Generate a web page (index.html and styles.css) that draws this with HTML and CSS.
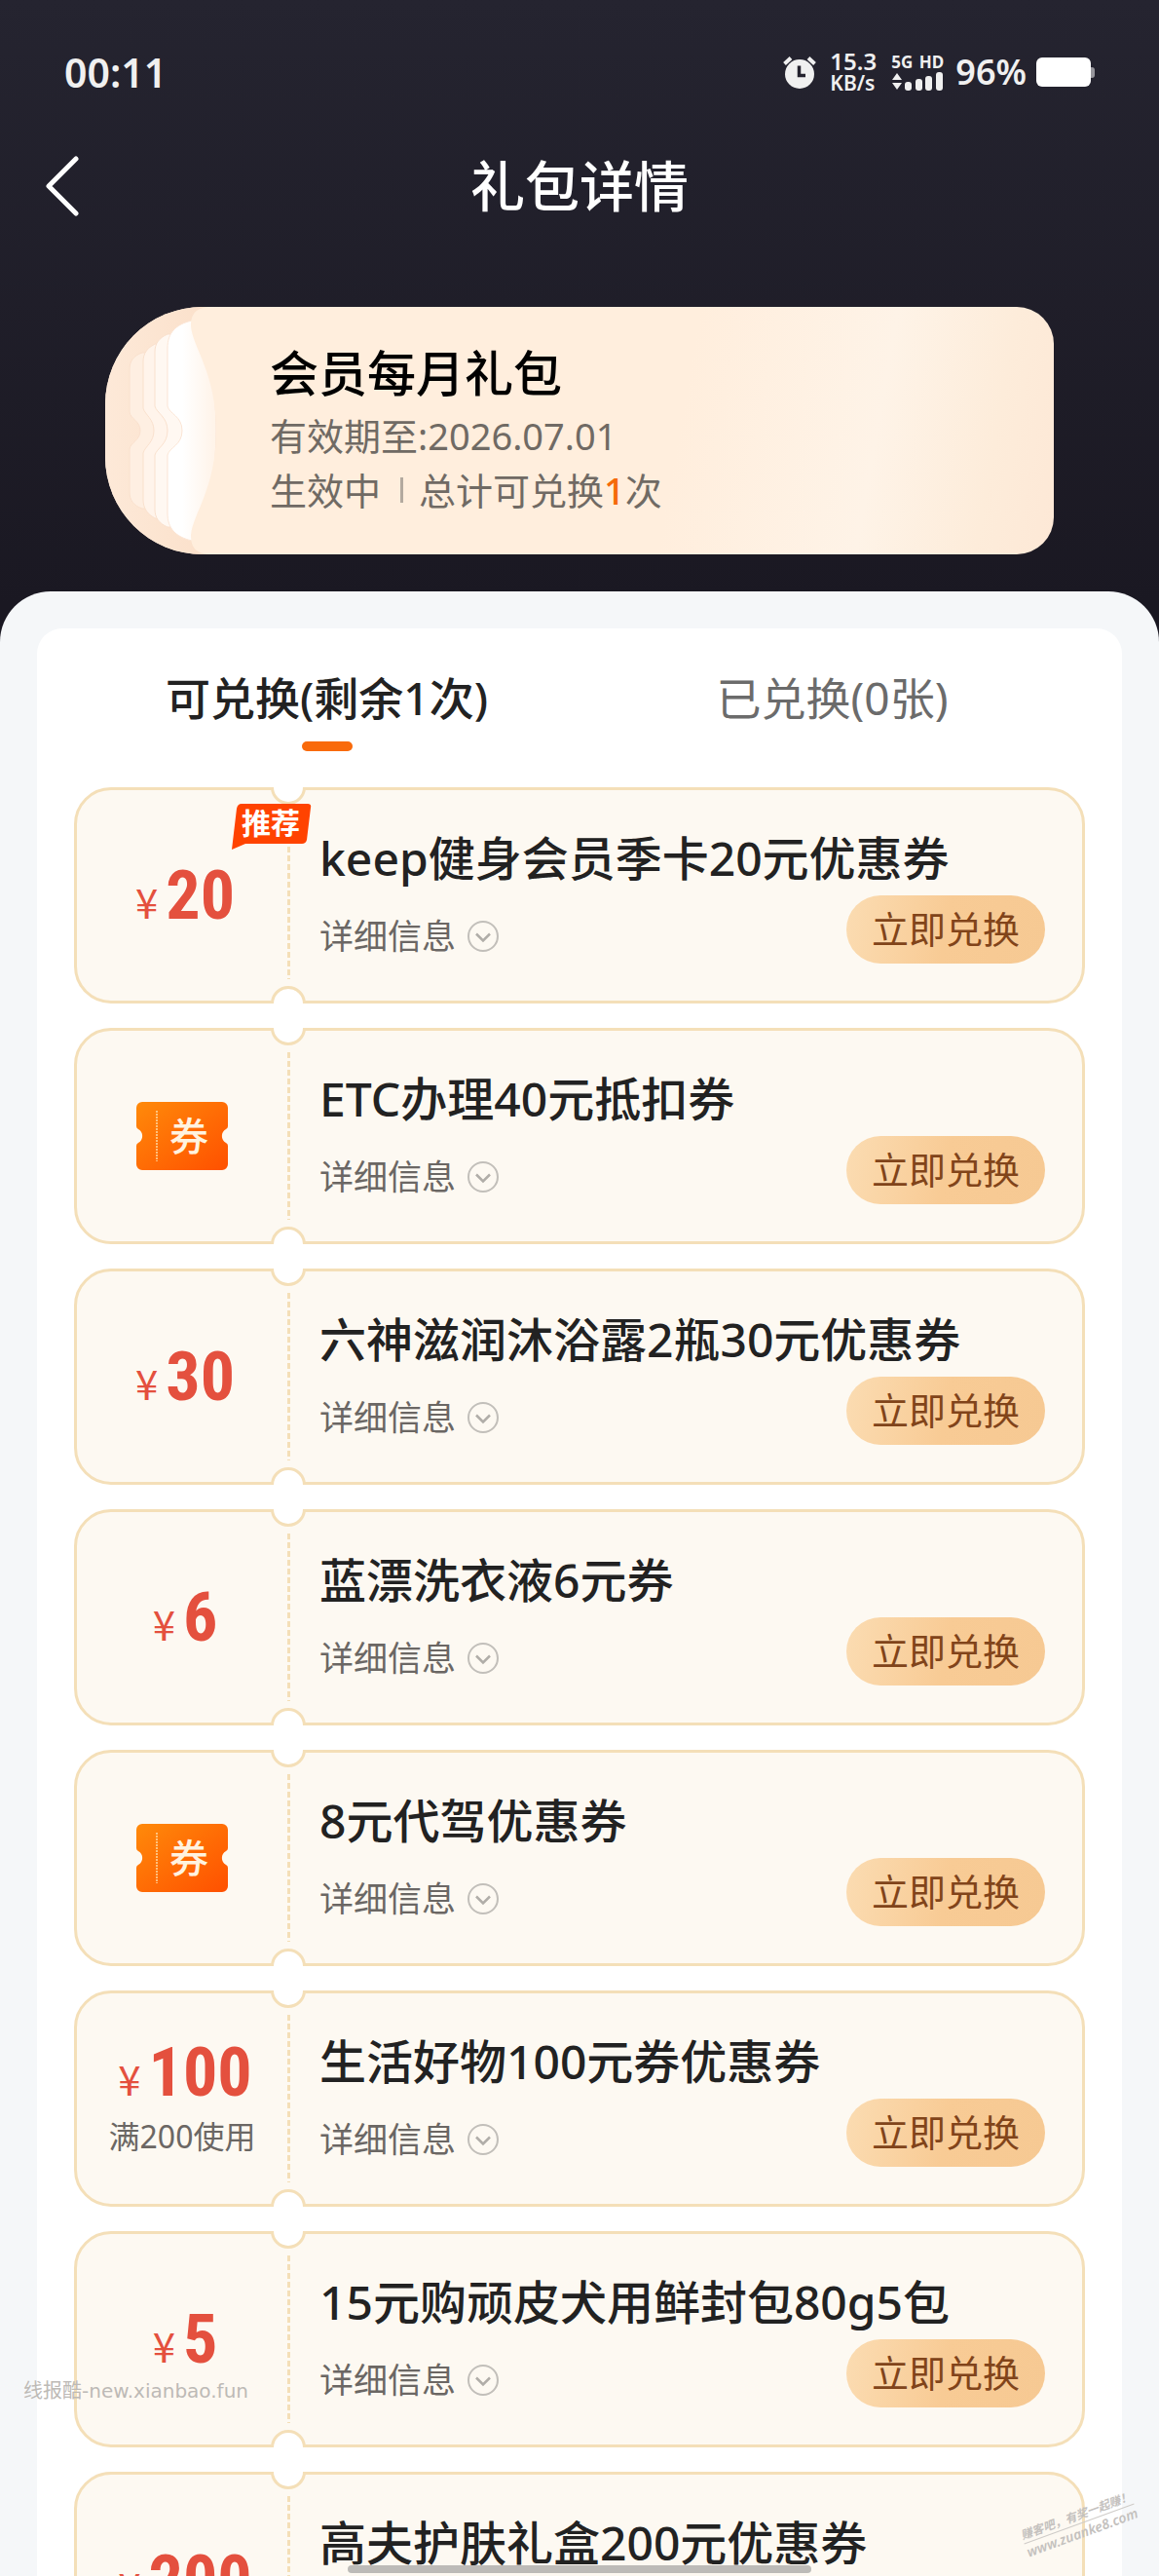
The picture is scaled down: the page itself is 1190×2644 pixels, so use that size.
FILE: index.html
```html
<!DOCTYPE html>
<html lang="zh-CN">
<head>
  <meta charset="UTF-8" />
  <meta name="viewport" content="width=device-width, initial-scale=1.0" />
  <title>礼包详情</title>
  <link rel="stylesheet" href="styles.css">
</head>
<body>
  <svg class="symbols" aria-hidden="true">
    <defs>
      <linearGradient id="orange" x1="0" y1="0" x2="1" y2="1">
        <stop offset="0" stop-color="#ff8a0a" />
        <stop offset="1" stop-color="#ff5000" />
      </linearGradient>
    </defs>
    <symbol id="voucher" viewBox="0 0 94 70">
      <path fill="url(#orange)" d="M6 0H88a6 6 0 0 1 6 6V25q0 2-2 3a8 8 0 0 0 0 14q2 1 2 3V64a6 6 0 0 1-6 6H6a6 6 0 0 1-6-6V45q0-2 2-3a8 8 0 0 0 0-14q-2-1-2-3V6a6 6 0 0 1 6-6Z" />
      <path stroke="#ffd9a0" stroke-width="1.5" stroke-dasharray="2 1" d="M21 9V61" />
    </symbol>
    <symbol id="down" viewBox="0 0 32 32">
      <circle cx="16" cy="16" r="15" fill="none" stroke="#c2bfba" stroke-width="2" />
      <path d="M9 13.500l7 7 7-7" fill="none" stroke="#b0ada8" stroke-width="2.500" />
    </symbol>
  </svg>

  <header class="top">
    <div class="status">
      <span class="time">00:11</span>
      <svg class="alarm" viewBox="0 0 34 34" aria-hidden="true">
        <circle cx="17" cy="19" r="15" fill="#f0f0f0" />
        <path d="M1.500 8.500L8 2.500M32.500 8.500L26 2.500" stroke="#f0f0f0" stroke-width="4" />
        <path d="M16.500 10.500V20.500H23" fill="none" stroke="#24222e" stroke-width="3.500" />
      </svg>
      <span class="speed"><b>15.3</b><i>KB/s</i></span>
      <span class="signal">
        <span class="net"><b>5G</b><b>HD</b></span>
        <svg viewBox="0 0 54 20" aria-hidden="true">
          <path fill="#f0f0f0" d="M6 1l5 7H1zM6 18l5-7H1z" />
          <rect x="14" y="10" width="7" height="9" rx="3" fill="#f0f0f0" />
          <rect x="25" y="7" width="7" height="12" rx="3" fill="#f0f0f0" />
          <rect x="35" y="4" width="7" height="15" rx="3" fill="#f0f0f0" />
          <rect x="46" y="0" width="7" height="19" rx="3" fill="#f0f0f0" />
        </svg>
      </span>
      <span class="percent">96%</span>
      <svg class="battery" viewBox="0 0 60 30" aria-hidden="true">
        <rect x="54" y="10" width="6" height="11" rx="3" fill="#97969c" />
        <rect x="0" y="0" width="56" height="30" rx="6" fill="#fff" />
      </svg>
    </div>

    <nav class="nav">
      <button class="back" aria-label="返回">
        <svg viewBox="0 0 36 62" aria-hidden="true">
          <path d="M32 3L4 31l28 28" fill="none" stroke="#fff" stroke-width="5" stroke-linecap="round" stroke-linejoin="round" />
        </svg>
      </button>
      <h1>礼包详情</h1>
    </nav>

    <section class="member">
      <svg class="pages" viewBox="0 0 130 254" aria-hidden="true">
        <defs>
          <linearGradient id="front" x1="0" y1="0" x2="1" y2="0">
            <stop offset="0.300" stop-color="#fff" />
            <stop offset="1" stop-color="#fff3e8" />
          </linearGradient>
          <linearGradient id="edge" x1="0" y1="0" x2="1" y2="0">
            <stop offset="0" stop-color="#fde9d8" />
            <stop offset="1" stop-color="#fbe0ca" />
          </linearGradient>
        </defs>
        <path fill="url(#edge)" d="M0 0H110V254H0Z" />
        <g stroke="#f9e0cd" stroke-width="1">
          <path fill="#feefe2" d="M38 47C29 50 25 56 25 64V108C26 115 36 117 36 127C36 137 26 139 25 146V190C25 198 29 204 38 207H90V47Z" />
          <path fill="#fff4eb" d="M54 37C43 41 39 48 39 56V104C41 111 50 115 50 127C50 139 41 143 39 150V198C39 206 43 214 54 218H90V37Z" />
          <path fill="#fff8f2" d="M64 28C55 32 51 38 51 46V102C53 109 64 113 64 127C64 141 53 145 51 152V208C51 216 55 222 64 226H90V28Z" />
        </g>
        <path fill="url(#front)" stroke="#fbe5d5" stroke-width="1" d="M89 14C72 18 64 27 64 42V102C66 110 79 112 79 127C79 142 66 144 64 152V212C64 227 72 236 89 240C106 208 114 170 114 127C114 84 106 46 89 14Z" />
        <path fill="#ffeedd" d="M110 0C92 0 88 8 88 20C90 42 114 68 114 127C114 186 90 212 88 234C88 246 92 254 110 254H130V0Z" />
      </svg>
      <h2>会员每月礼包</h2>
      <p>有效期至:2026.07.01</p>
      <p class="state">生效中<span class="bar"></span>总计可兑换<em>1</em>次</p>
    </section>
  </header>

  <main class="sheet">
    <div class="panel">
      <div class="tabs" role="tablist">
        <button class="tab active" role="tab" aria-selected="true">可兑换(剩余1次)</button>
        <button class="tab" role="tab" aria-selected="false">已兑换(0张)</button>
      </div>

      <ul class="list">
        <li class="coupon">
          <div class="worth"><p class="price"><small>¥</small>20</p></div>
          <span class="badge">
            <svg viewBox="0 0 82 47" aria-hidden="true">
              <path fill="#ff4300" d="M10 0H78Q82 0 81 4L77 37Q76 41 72 41H14L0 47L5 5Q6 0 10 0Z" />
            </svg>
            <b>推荐</b>
          </span>
          <div class="info">
            <h3>keep健身会员季卡20元优惠券</h3>
            <div class="foot">
              <button class="detail">详细信息<svg aria-hidden="true"><use href="#down" /></svg></button>
              <button class="redeem">立即兑换</button>
            </div>
          </div>
        </li>
        <li class="coupon">
          <div class="worth"><span class="voucher"><svg aria-hidden="true"><use href="#voucher" /></svg><b>券</b></span></div>
          <div class="info">
            <h3>ETC办理40元抵扣券</h3>
            <div class="foot">
              <button class="detail">详细信息<svg aria-hidden="true"><use href="#down" /></svg></button>
              <button class="redeem">立即兑换</button>
            </div>
          </div>
        </li>
        <li class="coupon">
          <div class="worth"><p class="price"><small>¥</small>30</p></div>
          <div class="info">
            <h3>六神滋润沐浴露2瓶30元优惠券</h3>
            <div class="foot">
              <button class="detail">详细信息<svg aria-hidden="true"><use href="#down" /></svg></button>
              <button class="redeem">立即兑换</button>
            </div>
          </div>
        </li>
        <li class="coupon">
          <div class="worth"><p class="price"><small>¥</small>6</p></div>
          <div class="info">
            <h3>蓝漂洗衣液6元券</h3>
            <div class="foot">
              <button class="detail">详细信息<svg aria-hidden="true"><use href="#down" /></svg></button>
              <button class="redeem">立即兑换</button>
            </div>
          </div>
        </li>
        <li class="coupon">
          <div class="worth"><span class="voucher"><svg aria-hidden="true"><use href="#voucher" /></svg><b>券</b></span></div>
          <div class="info">
            <h3>8元代驾优惠券</h3>
            <div class="foot">
              <button class="detail">详细信息<svg aria-hidden="true"><use href="#down" /></svg></button>
              <button class="redeem">立即兑换</button>
            </div>
          </div>
        </li>
        <li class="coupon">
          <div class="worth"><p class="price"><small>¥</small>100</p><p class="limit">满200使用</p></div>
          <div class="info">
            <h3>生活好物100元券优惠券</h3>
            <div class="foot">
              <button class="detail">详细信息<svg aria-hidden="true"><use href="#down" /></svg></button>
              <button class="redeem">立即兑换</button>
            </div>
          </div>
        </li>
        <li class="coupon">
          <div class="worth"><p class="price"><small>¥</small>5</p></div>
          <div class="info">
            <h3>15元购顽皮犬用鲜封包80g5包</h3>
            <div class="foot">
              <button class="detail">详细信息<svg aria-hidden="true"><use href="#down" /></svg></button>
              <button class="redeem">立即兑换</button>
            </div>
          </div>
        </li>
        <li class="coupon">
          <div class="worth"><p class="price"><small>¥</small>200</p></div>
          <div class="info">
            <h3>高夫护肤礼盒200元优惠券</h3>
            <div class="foot">
              <button class="detail">详细信息<svg aria-hidden="true"><use href="#down" /></svg></button>
              <button class="redeem">立即兑换</button>
            </div>
          </div>
        </li>
      </ul>
    </div>
  </main>

  <div class="mark-left">线报酷-new.xianbao.fun</div>
  <div class="mark-right"><span>赚客吧，有奖一起赚！</span><span>www.zuanke8.com</span></div>
  <div class="home-bar"></div>
</body>
</html>
```
FILE: styles.css
```css
* {
  box-sizing: border-box;
}
body {
  margin: 0;
  height: 100vh;
  overflow: hidden;
  display: flex;
  flex-direction: column;
  background: linear-gradient(#252430, #1a1822 620px);
  font-family: "Noto Sans", "Noto Sans CJK SC", sans-serif;
  color: #222;
  position: relative;
}
h1, h2, h3, p, ul {
  margin: 0;
  padding: 0;
  font-weight: 500;
}
button {
  border: none;
  background: none;
  padding: 0;
  margin: 0;
  font-family: inherit;
  cursor: pointer;
}
svg {
  display: block;
}
.symbols {
  position: absolute;
  width: 0;
  height: 0;
}
.top {
  flex: none;
  padding-bottom: 38px;
}

/* status bar */
.status {
  display: flex;
  align-items: center;
  height: 48px;
  margin-top: 50px;
  padding: 0 66px;
  color: #f0f0f0;
}
.time {
  flex: 1;
  font-size: 41px;
  line-height: 48px;
  font-weight: 600;
}
.alarm {
  width: 34px;
  height: 34px;
  margin-right: 14px;
}
.speed {
  width: 50px;
  margin-right: 13px;
  font-size: 24px;
  line-height: 22px;
  font-weight: 600;
}
.speed b, .speed i {
  display: block;
  font-weight: 600;
  font-style: normal;
}
.speed i {
  font-size: 21px;
}
.signal {
  width: 54px;
  margin-right: 12px;
}
.signal svg {
  width: 54px;
  height: 20px;
}
.net {
  display: flex;
  justify-content: space-between;
  font-size: 17px;
  line-height: 20px;
}
.percent {
  font-size: 36px;
  line-height: 48px;
  font-weight: 600;
  margin-right: 10px;
}
.battery {
  width: 60px;
  height: 30px;
}

/* title bar */
.nav {
  display: grid;
  grid-template-columns: 82px 1fr 82px;
  align-items: center;
  margin-top: 53px;
  color: #fff;
}
.back {
  display: flex;
  justify-content: flex-end;
}
.back svg {
  width: 36px;
  height: 62px;
}
.nav h1 {
  font-size: 56px;
  line-height: 78px;
  padding-bottom: 2px;
  text-align: center;
}

/* member card */
.member {
  position: relative;
  overflow: hidden;
  margin: 84px 108px 0;
  height: 254px;
  padding: 38px 40px 0 169px;
  border-radius: 100px 38px 38px 100px;
  background: linear-gradient(100deg, #ffeedd 60%, #fef3e7 80%, #fdecda 92%, #fde8d6);
}
.pages {
  position: absolute;
  left: 0;
  top: 0;
  width: 130px;
  height: 254px;
}
.member h2 {
  font-size: 50px;
  line-height: 60px;
  margin-bottom: 6px;
  color: #000;
}
.member p {
  font-size: 38px;
  line-height: 56px;
  font-weight: 400;
  color: #706a64;
}
.state {
  display: flex;
  align-items: center;
}
.state .bar {
  width: 3px;
  height: 26px;
  margin: 0 16px 0 20px;
  background: #b3a99f;
}
.state em {
  font-style: normal;
  font-weight: 500;
  color: #f56a0a;
}

/* sheet */
.sheet {
  flex: 1;
  min-height: 0;
  padding: 38px 38px 0;
  border-radius: 52px 52px 0 0;
  background: #f5f7f9;
}
.panel {
  height: 100%;
  overflow: hidden;
  padding: 36px 38px 0;
  border-radius: 26px 26px 0 0;
  background: #fff;
}
.tabs {
  display: flex;
  margin-bottom: 37px;
}
.tab {
  flex: 1;
  display: flex;
  flex-direction: column;
  align-items: center;
  font-size: 46px;
  line-height: 70px;
  color: #6b6b6b;
}
.tab::after {
  content: "";
  width: 52px;
  height: 10px;
  margin-top: 10px;
  border-radius: 5px;
}
.tab.active {
  color: #222;
  font-weight: 500;
}
.tab.active::after {
  background: #f96a0b;
}

/* coupons */
.list {
  display: flex;
  flex-direction: column;
  gap: 25px;
  list-style: none;
}
.coupon {
  position: relative;
  flex: none;
  display: flex;
  height: 222px;
  border: 3px solid #f4dfb8;
  border-radius: 38px;
  background: #fdf9f2;
}
/* notches cut in the top and bottom edge */
.coupon::before, .coupon::after {
  content: "";
  position: absolute;
  left: 199px;
  width: 30px;
  height: 30px;
  border: 3px solid #f4dfb8;
  border-radius: 50%;
  background: #fff;
}
.coupon::before {
  top: -21px;
  clip-path: inset(18px 0 0);
}
.coupon::after {
  bottom: -21px;
  clip-path: inset(0 0 18px);
}
.worth {
  position: relative;
  width: 219px;
  display: flex;
  flex-direction: column;
  align-items: center;
  justify-content: center;
  padding-right: 3px;
}
.worth::after {
  content: "";
  position: absolute;
  right: 0;
  top: 22px;
  bottom: 22px;
  width: 3px;
  background: repeating-linear-gradient(#f4dfb8 0 6px, transparent 6px 9px);
}
.price {
  font-family: "Roboto Condensed", Roboto, sans-serif;
  font-size: 70px;
  line-height: 76px;
  font-weight: 700;
  padding-left: 6px;
  color: #e4503e;
}
.price small {
  font-family: "Noto Sans CJK SC", sans-serif;
  font-size: 42px;
  line-height: 56px;
  font-weight: 400;
  margin-right: 8px;
}
.limit {
  font-size: 32px;
  line-height: 40px;
  margin: 8px 0 6px;
  font-weight: 400;
  color: #6b6764;
}
.voucher {
  position: relative;
  width: 94px;
  height: 70px;
}
.voucher svg {
  width: 94px;
  height: 70px;
}
.voucher b {
  position: absolute;
  right: 20px;
  top: 0;
  font-size: 40px;
  line-height: 70px;
  font-weight: 500;
  color: #fff3e0;
}
.badge {
  position: absolute;
  z-index: 1;
  left: 159px;
  top: 14px;
  width: 82px;
  height: 47px;
}
.badge svg {
  width: 82px;
  height: 47px;
}
.badge b {
  position: absolute;
  left: 10px;
  top: 0;
  font-size: 30px;
  line-height: 40px;
  color: #fff;
  white-space: nowrap;
}
.info {
  flex: 1;
  min-width: 0;
  padding: 40px 38px 0 30px;
}
.info h3 {
  font-size: 48px;
  line-height: 60px;
  margin-bottom: 8px;
  white-space: nowrap;
}
.foot {
  display: flex;
  align-items: center;
  justify-content: space-between;
}
.detail {
  display: flex;
  align-items: center;
  gap: 12px;
  padding-top: 14px;
  font-size: 35px;
  line-height: 48px;
  color: #6b6764;
}
.detail svg {
  width: 32px;
  height: 32px;
}
.redeem {
  width: 204px;
  height: 70px;
  border-radius: 35px;
  background: linear-gradient(100deg, #fbdcb2, #f8cb95 50%, #f6c993);
  font-size: 38px;
  line-height: 68px;
  padding-bottom: 2px;
  color: #81441a;
}

/* overlays */
.mark-left {
  position: absolute;
  left: 24px;
  bottom: 176px;
  font-family: "DejaVu Sans", "Noto Sans CJK SC", sans-serif;
  font-size: 20px;
  line-height: 28px;
  color: #bdbab6;
}
.mark-right {
  position: absolute;
  right: 22px;
  bottom: 36px;
  width: 120px;
  transform: rotate(-20deg);
  font-weight: 600;
  font-style: italic;
  color: #c4c1be;
}
.mark-right span {
  display: block;
  font-size: 12px;
  line-height: 17px;
  white-space: nowrap;
}
.mark-right span:first-child {
  border-bottom: 1px solid #cfccc8;
}
.mark-right span:last-child {
  font-size: 14px;
}
.home-bar {
  position: absolute;
  left: 30%;
  right: 30%;
  bottom: 3px;
  height: 8px;
  border-radius: 4px;
  background: #bdbbb8;
}
```
